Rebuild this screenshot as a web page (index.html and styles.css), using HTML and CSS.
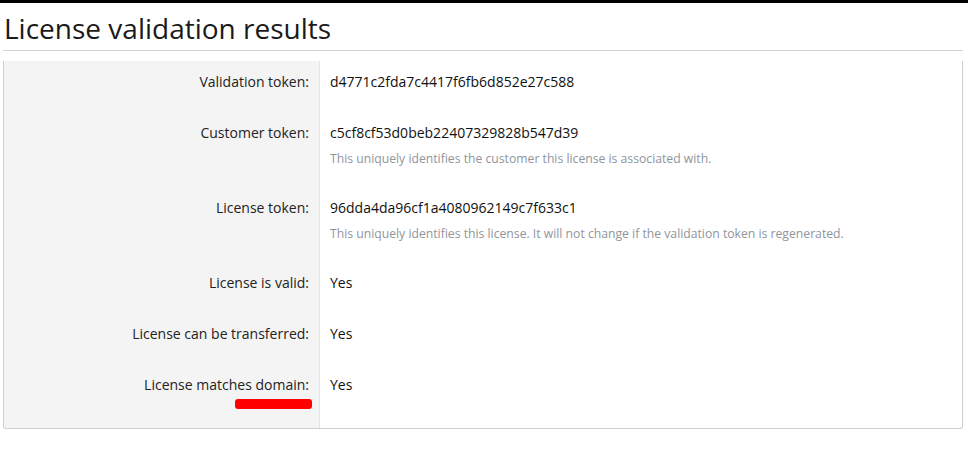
FILE: index.html
```html
<!DOCTYPE html>
<html>
<head>
<meta charset="utf-8">
<link rel="stylesheet" href="styles.css">
</head>
<body>
<div class="topbar"></div>
<h1 class="title">License validation results</h1>
<div class="panel">
  <div class="label">Validation token:</div>
  <div class="value">d4771c2fda7c4417f6fb6d852e27c588</div>

  <div class="label">Customer token:</div>
  <div class="value">c5cf8cf53d0beb22407329828b547d39<div class="help">This uniquely identifies the customer this license is associated with.</div></div>

  <div class="label">License token:</div>
  <div class="value">96dda4da96cf1a4080962149c7f633c1<div class="help">This uniquely identifies this license. It will not change if the validation token is regenerated.</div></div>

  <div class="label">License is valid:</div>
  <div class="value">Yes</div>

  <div class="label">License can be transferred:</div>
  <div class="value">Yes</div>

  <div class="label last">License matches domain:<div class="mark"></div></div>
  <div class="value last">Yes</div>
</div>
</body>
</html>
```
FILE: styles.css
```css
html, body {
  margin: 0;
  padding: 0;
  background: #fff;
  font-family: "Open Sans", "Noto Sans", sans-serif;
}
.topbar {
  height: 3px;
  background: #000;
}
.title {
  margin: 0 5px 0 3px;
  padding: 6px 0 3px 1px;
  font-size: 28px;
  font-weight: 400;
  line-height: 38px;
  color: #1a1a1a;
  border-bottom: 1px solid #d3d3d3;
}
.panel {
  margin: 10px 5px 0 3px;
  padding: 1px 0 12px;
  border: 1px solid #cfcfcf;
  border-top: none;
  border-radius: 0 0 3px 3px;
  display: grid;
  grid-template-columns: 315px 1fr;
  background: linear-gradient(to right, #f4f4f4 0, #f4f4f4 315px, #e4e4e4 315px, #e4e4e4 316px, #fff 316px);
  font-size: 14px;
  line-height: 20px;
}
.label {
  padding: 10px 10px 21px 0;
  text-align: right;
  color: #222;
}
.value {
  padding: 10px 0 21px 11px;
  color: #111;
}
.help {
  margin-top: 7px;
  font-size: 12.2px;
  line-height: 17px;
  color: #8f959c;
}
.label.last {
  padding-bottom: 7px;
}
.mark {
  width: 77px;
  height: 10px;
  margin: 4px -3px 0 auto;
  background: #ff0000;
  border-radius: 3px;
}
```
